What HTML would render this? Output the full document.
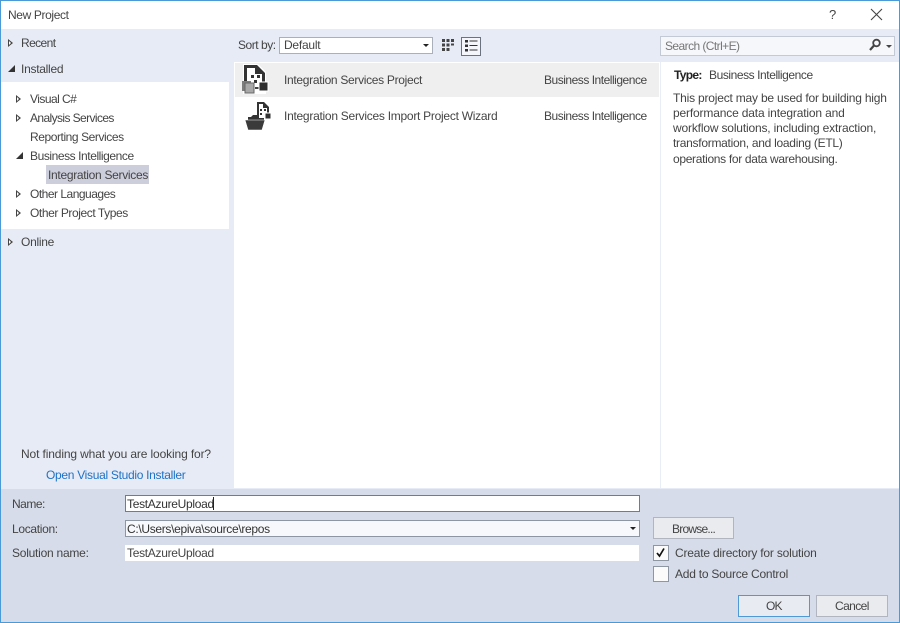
<!DOCTYPE html>
<html><head><meta charset="utf-8">
<style>
html,body{margin:0;padding:0}
body{width:900px;height:623px;overflow:hidden;position:relative;background:#fff;font-family:"Liberation Sans",sans-serif;font-size:12px;color:#444}
#w{position:absolute;left:0;top:0;width:900px;height:623px;filter:blur(.3px)}
.b{position:absolute}
.t{position:absolute;white-space:nowrap;line-height:16px;height:16px;letter-spacing:-.2px}
.r{width:0;height:0;position:absolute;border-left:5px solid #444;border-top:4px solid transparent;border-bottom:4px solid transparent}
.r:after{content:"";position:absolute;left:-4px;top:-2px;width:0;height:0;border-left:2.5px solid #fff;border-top:2px solid transparent;border-bottom:2px solid transparent}
.d{width:0;height:0;position:absolute;border-left:7px solid transparent;border-bottom:7px solid #333}
</style></head>
<body><div id="w">
<div class="b" style="left:0;top:0;width:900px;height:623px;background:#fff"></div>
<div class="b" style="left:1px;top:29px;width:898px;height:460px;background:#e6ebf5"></div>
<div class="b" style="left:1px;top:82px;width:228px;height:147px;background:#fff"></div>
<div class="b" style="left:234px;top:62px;width:666px;height:426px;background:#fff"></div>
<div class="b" style="left:235px;top:63px;width:424px;height:34px;background:#efefef"></div>
<div class="b" style="left:660px;top:62px;width:1px;height:426px;background:#e8edf6"></div>
<div class="b" style="left:1px;top:489px;width:898px;height:133px;background:#d6dce9"></div>
<div class="b" style="left:0;top:0;width:1px;height:623px;background:#4a9ad8"></div>
<div class="b" style="left:899px;top:0;width:1px;height:623px;background:#4a9ad8"></div>
<div class="b" style="left:0;top:0;width:900px;height:1px;background:#4a9ad8"></div>
<div class="b" style="left:0;top:622px;width:900px;height:1px;background:#4a9ad8"></div>

<div class="t" style="left:8px;top:7px;letter-spacing:-.37px">New Project</div>
<div class="t" style="left:829px;top:7px;font-size:13px">?</div>
<svg class="b" style="left:870px;top:8px" width="13" height="13"><path d="M1 1L12 12M12 1L1 12" stroke="#444" stroke-width="1.1" fill="none"/></svg>

<div class="r" style="left:8px;top:39px"></div><div class="t" style="left:21px;top:35px;letter-spacing:-.6px">Recent</div>
<div class="d" style="left:8px;top:65px"></div><div class="t" style="left:21px;top:61px;letter-spacing:-.27px">Installed</div>
<div class="r" style="left:16px;top:95px"></div><div class="t" style="left:30px;top:91px;letter-spacing:-.54px">Visual C#</div>
<div class="r" style="left:16px;top:114px"></div><div class="t" style="left:30px;top:110px;letter-spacing:-.6px">Analysis Services</div>
<div class="t" style="left:30px;top:129px;letter-spacing:-.43px">Reporting Services</div>
<div class="d" style="left:16px;top:152px"></div><div class="t" style="left:30px;top:148px;letter-spacing:-.43px">Business Intelligence</div>
<div class="b" style="left:46px;top:165px;width:103px;height:19px;background:#cccedb"></div>
<div class="t" style="left:48px;top:167px;letter-spacing:-.3px">Integration Services</div>
<div class="r" style="left:16px;top:190px"></div><div class="t" style="left:30px;top:186px;letter-spacing:-.5px">Other Languages</div>
<div class="r" style="left:16px;top:209px"></div><div class="t" style="left:30px;top:205px;letter-spacing:-.42px">Other Project Types</div>
<div class="r" style="left:8px;top:238px"></div><div class="t" style="left:21px;top:234px;letter-spacing:-.27px">Online</div>
<div class="t" style="left:21px;top:446px;letter-spacing:-.13px">Not finding what you are looking for?</div>
<div class="t" style="left:46px;top:467px;color:#1e72c8;letter-spacing:-.3px">Open Visual Studio Installer</div>

<div class="t" style="left:238px;top:37px;letter-spacing:-.47px">Sort by:</div>
<div class="b" style="left:279px;top:37px;width:152px;height:15px;background:#fff;border:1px solid #a9b0bb"></div>
<div class="t" style="left:284px;top:37px;letter-spacing:-.24px">Default</div>
<div class="b" style="left:423px;top:44px;width:0;height:0;border-left:3px solid transparent;border-right:3px solid transparent;border-top:3px solid #222"></div>
<svg class="b" style="left:441px;top:38px" width="14" height="14" fill="#444"><path d="M1 1h3v3h-3zM5.500 1h3v3h-3zM10 1h3v3h-3zM1 5.500h3v3h-3zM5.500 5.500h3v3h-3zM10 5.500h3v2h-3zM1 10h3v3h-3zM5.500 10h3v3h-3z"/></svg>
<div class="b" style="left:461px;top:37px;width:18px;height:17px;background:#f4f6fb;border:1px solid #6b7280"></div>
<svg class="b" style="left:465px;top:40px" width="13" height="12" fill="#333"><path d="M0 0h3v2.500h-3zM4.500 .5h8v1h-8zM0 4.500h3v2.500h-3zM4.500 5h8v1h-8zM0 9h3v2.500h-3zM4.500 9.500h8v1h-8z"/></svg>

<svg class="b" style="left:241px;top:63px" width="30" height="33">
<path d="M2 1h15l8 8v22H2z" fill="#fff"/>
<path d="M3 2h13l8 8v11h-3V11h-7V5H6v14H3z" fill="#333"/>
<path d="M10 12h3v3h-3zM16 12h3v3h-3zM13 17h3v3h-3z" fill="#333"/>
<rect x="1" y="18" width="9" height="10" fill="#7d7d7d"/><rect x="4" y="20" width="9" height="10" fill="#a8a8a8" stroke="#666"/>
<path d="M14 24h4v2h-4z" fill="#444"/><rect x="18" y="19" width="9" height="9" fill="#2d2d2d" stroke="#fff"/>
</svg>
<svg class="b" style="left:243px;top:100px" width="30" height="32">
<path d="M13 1h9l6 6v14H13z" fill="#fff"/>
<path d="M14 2h7l5 5v7h-2V8h-4V4h-4v11h-2z" fill="#333"/>
<path d="M17 9h2v2h-2zM21 9h2v2h-2zM17 13h2v2h-2z" fill="#333"/>
<rect x="22" y="13" width="6" height="6" fill="#333" stroke="#fff"/>
<path d="M5 17h3l2-2h6v3h5v3H5z" fill="#333"/>
<path d="M2 20h20l-3 10H5z" fill="#3a3a3a" stroke="#fff" stroke-width=".6"/>
</svg>

<div class="t" style="left:284px;top:72px;letter-spacing:-.31px">Integration Services Project</div>
<div class="t" style="left:284px;top:108px;letter-spacing:-.27px">Integration Services Import Project Wizard</div>
<div class="t" style="left:544px;top:72px;letter-spacing:-.48px">Business Intelligence</div>
<div class="t" style="left:544px;top:108px;letter-spacing:-.48px">Business Intelligence</div>

<div class="b" style="left:660px;top:36px;width:233px;height:18px;background:#f6f7fb;border:1px solid #c3cad6"></div>
<div class="t" style="left:665px;top:38px;color:#777;letter-spacing:-.57px">Search (Ctrl+E)</div>
<svg class="b" style="left:868px;top:38px" width="14" height="14"><circle cx="8.500" cy="5" r="3.300" fill="none" stroke="#444" stroke-width="1.800"/><path d="M6 7.500L2 12" stroke="#444" stroke-width="2.200"/></svg>
<div class="b" style="left:886px;top:45px;width:0;height:0;border-left:3px solid transparent;border-right:3px solid transparent;border-top:3px solid #444"></div>

<div class="t" style="left:674px;top:67px;font-weight:bold;color:#222;letter-spacing:-.7px">Type:</div>
<div class="t" style="left:709px;top:67px;letter-spacing:-.43px">Business Intelligence</div>
<div class="t" style="left:673px;top:90px;letter-spacing:-.2px">This project may be used for building high</div>
<div class="t" style="left:673px;top:105px;letter-spacing:-.16px">performance data integration and</div>
<div class="t" style="left:673px;top:120px;letter-spacing:-.17px">workflow solutions, including extraction,</div>
<div class="t" style="left:673px;top:135px;letter-spacing:-.28px">transformation, and loading (ETL)</div>
<div class="t" style="left:673px;top:151px;letter-spacing:-.32px">operations for data warehousing.</div>

<div class="t" style="left:12px;top:496px;letter-spacing:-.5px">Name:</div>
<div class="t" style="left:12px;top:521px;letter-spacing:-.32px">Location:</div>
<div class="t" style="left:12px;top:545px;letter-spacing:-.24px">Solution name:</div>

<div class="b" style="left:125px;top:495px;width:513px;height:15px;background:#fff;border:1px solid #5a78d8"></div>
<div class="t" style="left:127px;top:496px;color:#333;letter-spacing:-.3px">TestAzureUpload</div>
<div class="b" style="left:213px;top:497px;width:1px;height:13px;background:#222"></div>
<div class="b" style="left:125px;top:520px;width:513px;height:15px;background:#f7f8fb;border:1px solid #8e95a3"></div>
<div class="t" style="left:127px;top:521px;color:#333;letter-spacing:-.32px">C:\Users\epiva\source\repos</div>
<div class="b" style="left:630px;top:527px;width:0;height:0;border-left:3px solid transparent;border-right:3px solid transparent;border-top:3px solid #222"></div>
<div class="b" style="left:125px;top:545px;width:514px;height:16px;background:#fff"></div>
<div class="t" style="left:127px;top:545px;letter-spacing:-.3px">TestAzureUpload</div>

<div class="b" style="left:653px;top:517px;width:79px;height:20px;background:#eaebef;border:1px solid #b0b5bf"></div>
<div class="t" style="left:672px;top:521px;letter-spacing:-.77px">Browse...</div>
<div class="b" style="left:653px;top:545px;width:14px;height:14px;background:#fbfbfc;border:1px solid #8e95a3"></div>
<svg class="b" style="left:655px;top:547px" width="12" height="12"><path d="M2 6l2.500 3L9 1.500" fill="none" stroke="#111" stroke-width="1.700"/></svg>
<div class="t" style="left:675px;top:545px;letter-spacing:-.2px">Create directory for solution</div>
<div class="b" style="left:653px;top:566px;width:14px;height:14px;background:#fbfbfc;border:1px solid #8e95a3"></div>
<div class="t" style="left:675px;top:566px;letter-spacing:-.24px">Add to Source Control</div>

<div class="b" style="left:738px;top:595px;width:70px;height:20px;background:#e8ebf2;border:1px solid #4f9ad6"></div>
<div class="t" style="left:766px;top:598px;letter-spacing:-.8px">OK</div>
<div class="b" style="left:816px;top:595px;width:70px;height:20px;background:#eaebef;border:1px solid #b0b5bf"></div>
<div class="t" style="left:835px;top:598px;letter-spacing:-.6px">Cancel</div>
</div></body></html>
